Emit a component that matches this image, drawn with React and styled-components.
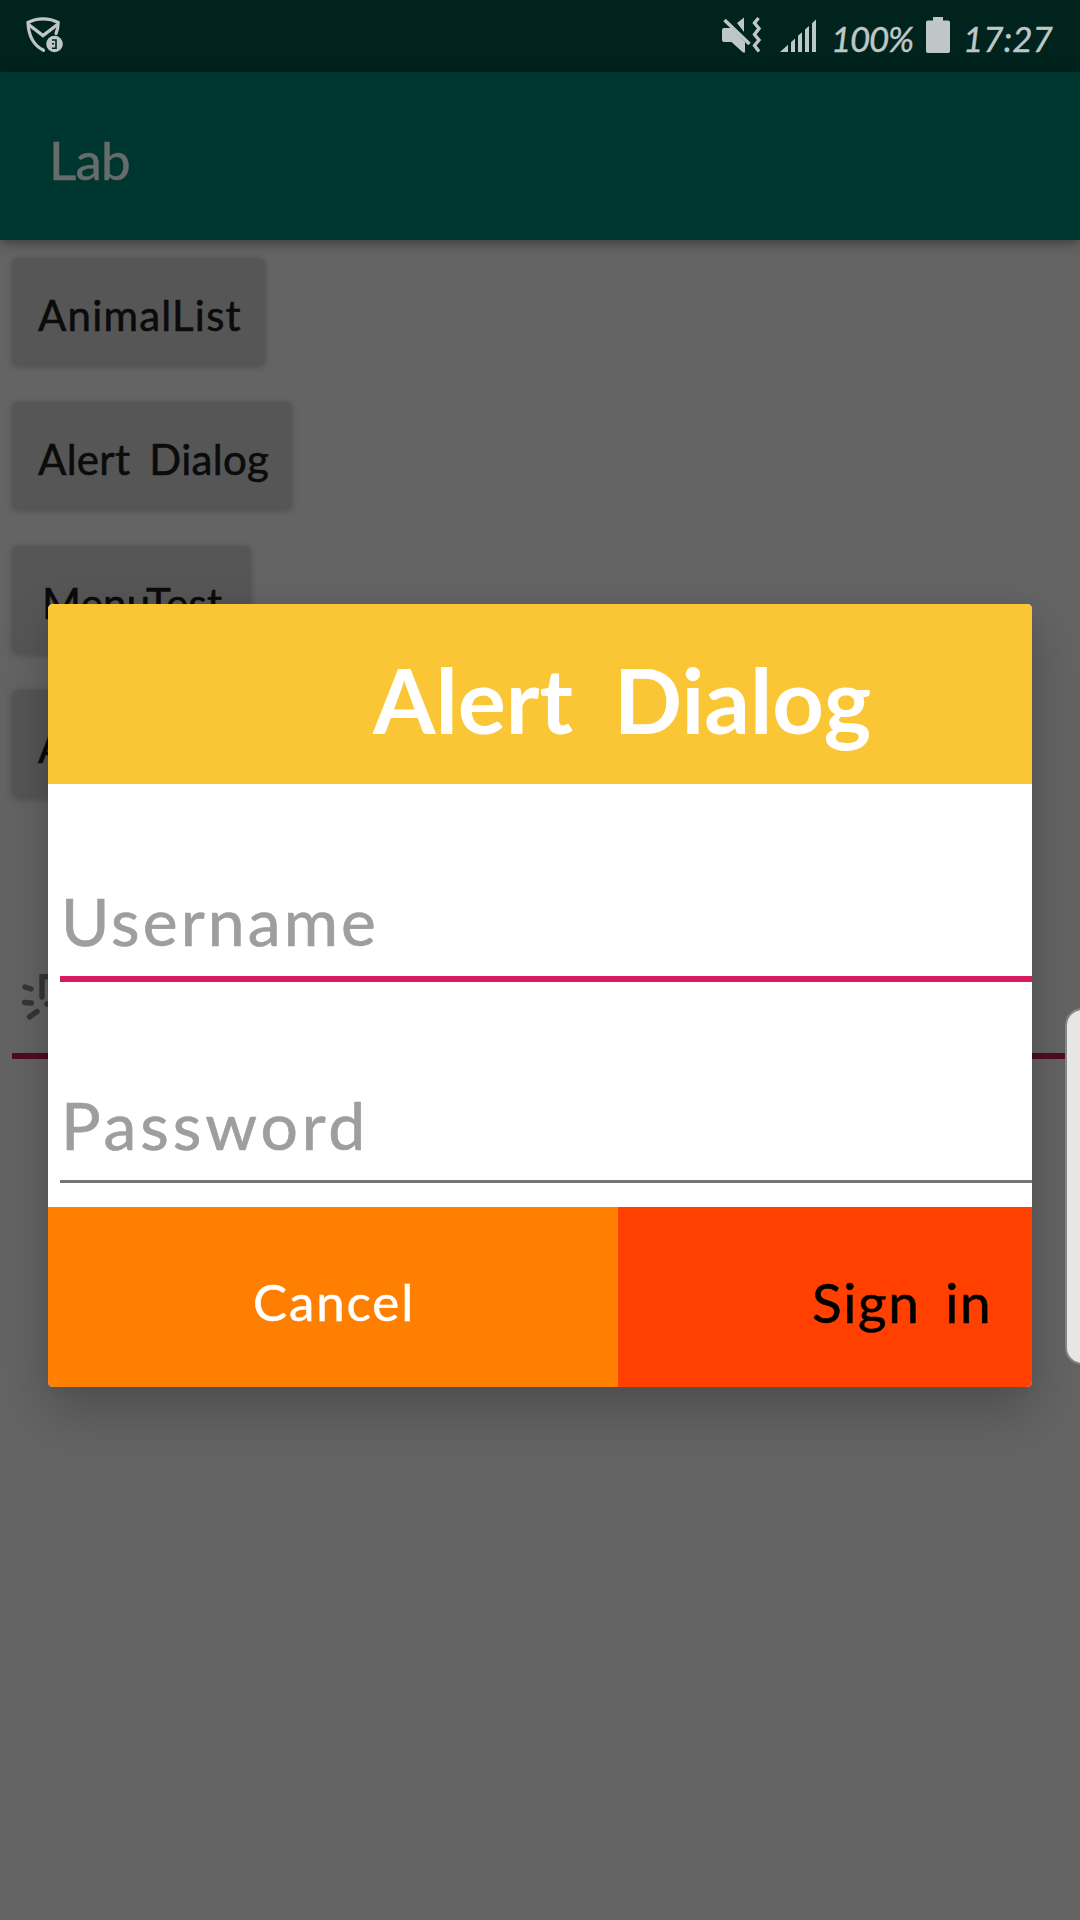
import React from "react";
import styled, { createGlobalStyle } from "styled-components";

const GlobalStyle = createGlobalStyle`
  * { box-sizing: border-box; }
  html, body { margin: 0; padding: 0; overflow: hidden; }
  body { font-family: Lato, "Open Sans", sans-serif; background: #646464; }
  button { font-family: inherit; border: 0; cursor: pointer; }
`;

const Screen = styled.div`
  position: relative;
  width: 1080px;
  height: 1920px;
  overflow: hidden;
  display: flex;
  flex-direction: column;
  background: #646464;
`;

const StatusBar = styled.header`
  display: flex;
  align-items: flex-start;
  justify-content: space-between;
  height: 72px;
  flex: none;
  padding: 14px 26px 0 24px;
  background: #00231d;
  color: #bfc7c6;
`;

const StatusGroup = styled.div`
  display: flex;
  align-items: flex-start;
`;

const StatusIcon = styled.svg`
  display: block;
  height: 42px;
  width: ${(p) => p.$w}px;
  margin-right: ${(p) => p.$gap || 0}px;
`;

const StatusText = styled.span`
  width: ${(p) => p.$w}px;
  margin-right: ${(p) => p.$gap || 0}px;
  font-size: 35px;
  line-height: 48px;
  font-style: italic;
  white-space: nowrap;
  letter-spacing: ${(p) => p.$ls}px;
  -webkit-text-stroke: 0.4px currentColor;
`;

const AppBar = styled.div`
  display: flex;
  align-items: center;
  height: 168px;
  flex: none;
  padding: 8px 48px 0 49px;
  background: #003630;
  box-shadow: 0 3px 12px rgba(0, 0, 0, 0.4);
  z-index: 1;
`;

const AppTitle = styled.h1`
  margin: 0;
  font-size: 53px;
  line-height: 68px;
  font-weight: 400;
  color: #676c6b;
  letter-spacing: -0.8px;
  -webkit-text-stroke: 0.5px currentColor;
`;

const Content = styled.main`
  display: flex;
  flex-direction: column;
  align-items: flex-start;
  gap: 36px;
  padding: 18px 12px 0;
`;

const ListButton = styled.button`
  width: ${(p) => p.$w}px;
  height: 108px;
  padding: 6px 0 0 ${(p) => p.$pad || 26}px;
  border-radius: 6px;
  background: #565656;
  color: #0b0b0b;
  box-shadow: 0 1px 6px rgba(0, 0, 0, 0.22);
  font-size: 42px;
  line-height: 52px;
  text-align: left;
  white-space: nowrap;
  letter-spacing: ${(p) => p.$ls}px;
  word-spacing: ${(p) => p.$ws || 0}px;
  -webkit-text-stroke: 0.6px currentColor;
`;

const BackField = styled.div`
  align-self: stretch;
  height: 225px;
  border-bottom: 6px solid #4f0b25;
  display: flex;
  align-items: flex-end;
  padding: 0 0 31px 8px;
`;

const Overlay = styled.div`
  position: absolute;
  inset: 72px 0 0 0;
  z-index: 2;
  display: flex;
  align-items: flex-start;
  justify-content: center;
  padding-top: 532px;
`;

const Dialog = styled.section`
  width: 984px;
  height: 783px;
  display: flex;
  flex-direction: column;
  overflow: hidden;
  border-radius: 5px;
  background: #fff;
  box-shadow: 0 24px 54px rgba(0, 0, 0, 0.23), 0 0 20px rgba(0, 0, 0, 0.03);
`;

const DialogTitle = styled.h2`
  margin: 0;
  height: 180px;
  flex: none;
  padding: 40px 0 0 325px;
  background: #fbc635;
  color: #fff;
  font-size: 90px;
  line-height: 110px;
  font-weight: 700;
  white-space: nowrap;
  letter-spacing: 0;
  word-spacing: 19px;
`;

const Fields = styled.div`
  flex: 1;
  padding-left: 12px;
`;

const Field = styled.div`
  height: ${(p) => p.$h}px;
  display: flex;
  align-items: flex-end;
  padding: 0 0 ${(p) => p.$pb}px 1px;
  border-bottom: ${(p) => p.$line};
`;

const Hint = styled.span`
  font-size: 66px;
  line-height: 80px;
  color: #9e9e9e;
  letter-spacing: ${(p) => p.$ls}px;
  -webkit-text-stroke: 0.7px currentColor;
`;

const Actions = styled.div`
  display: flex;
  height: 180px;
  flex: none;
`;

const Action = styled.button`
  width: ${(p) => p.$w}px;
  padding: 10px 0 0 ${(p) => p.$pad}px;
  background: ${(p) => p.$bg};
  color: ${(p) => p.$color};
  font-size: ${(p) => p.$size}px;
  line-height: 62px;
  text-align: left;
  white-space: nowrap;
  letter-spacing: ${(p) => p.$ls}px;
  word-spacing: ${(p) => p.$ws || 0}px;
  -webkit-text-stroke: 0.5px currentColor;
`;

const EdgeHandle = styled.aside`
  position: absolute;
  z-index: 3;
  top: 1008px;
  right: -20px;
  width: 35px;
  height: 357px;
  border: 2px solid #858585;
  border-radius: 18px;
  background: #e6e6e6;
`;

function MailShieldIcon() {
  return (
    <StatusIcon $w={42} viewBox="24 14 42 42" fill="none">
      <path d="M56 33.500c1.600-3.600 2.200-7 2.200-11C49 17.600 37 17.600 28 22.500 28.500 37 34 45.500 43.500 50.300" stroke="currentColor" strokeWidth="3.200" strokeLinecap="round" strokeLinejoin="round" />
      <path d="M28.500 24.500 43 35.500 57.500 24.500" stroke="currentColor" strokeWidth="3.400" />
      <circle cx="54.500" cy="44" r="8.300" fill="currentColor" />
      <path d="M52 40h4v8.200h-4M52 43.800h2" stroke="#00231d" strokeWidth="1.600" />
    </StatusIcon>
  );
}

function MuteVibrateIcon() {
  return (
    <StatusIcon $w={40} $gap={18} viewBox="722 14 40 42" fill="currentColor">
      <path d="M722 30q0-2 2-2h7l14 14v10.500h-2L731.500 42H724q-2 0-2-2zM737 23l7-5.500V32z" />
      <path d="m724.500 20 25 24" stroke="currentColor" strokeWidth="3.600" fill="none" />
      <path d="m758.500 18-4 5 4.500 5.500-4.500 6 4.500 5.500-4.500 5.500 4.500 6" stroke="currentColor" strokeWidth="3.400" fill="none" />
    </StatusIcon>
  );
}

function SignalIcon() {
  return (
    <StatusIcon $w={37} $gap={14} viewBox="780 14 37 42" fill="currentColor">
      <path d="M780 52l8-7.200V52zM791 42.200l4-3.600V52h-4zM798 35.800l4-3.600V52h-4zM805 29.500l4-3.600V52h-4zM812 23.200l4-3.600V52h-4z" />
    </StatusIcon>
  );
}

function BatteryIcon() {
  return (
    <StatusIcon $w={24} $gap={13} viewBox="926 14 24 42" fill="currentColor">
      <path d="M933 17h10v3.500h5q2 0 2 2V51q0 2-2 2h-20q-2 0-2-2V22.500q0-2 2-2h5z" />
    </StatusIcon>
  );
}

function SparkIcon() {
  return (
    <svg width="44" height="48" viewBox="20 974 44 48" fill="none" stroke="#363636" strokeWidth="5.400" strokeLinecap="round">
      <path d="m25 987 6 2M24.500 1002.500l7 .500M29.500 1017l7.500-5.500M42 997v-20.200h18M47 1004h8" />
    </svg>
  );
}

export default function App() {
  return (
    <Screen>
      <GlobalStyle />
      <StatusBar>
        <MailShieldIcon />
        <StatusGroup>
          <MuteVibrateIcon />
          <SignalIcon />
          <StatusText $w={81} $gap={14} $ls={-1.3}>100%</StatusText>
          <BatteryIcon />
          <StatusText $w={91} $ls={0}>17:27</StatusText>
        </StatusGroup>
      </StatusBar>
      <AppBar>
        <AppTitle>Lab</AppTitle>
      </AppBar>
      <Content>
        <ListButton $w={253} $ls={1.2}>AnimalList</ListButton>
        <ListButton $w={280} $ls={0.3} $ws={8}>Alert Dialog</ListButton>
        <ListButton $w={239} $pad={30} $ls={0.3}>MenuTest</ListButton>
        <ListButton $w={239} $ls={0}>A</ListButton>
        <BackField>
          <SparkIcon />
        </BackField>
      </Content>
      <Overlay>
        <Dialog>
          <DialogTitle>Alert Dialog</DialogTitle>
          <Fields>
            <Field $h={198} $pb={15} $line="6px solid #d81b60">
              <Hint $ls={3.1}>Username</Hint>
            </Field>
            <Field $h={201} $pb={15} $line="3px solid #757575">
              <Hint $ls={3.9}>Password</Hint>
            </Field>
          </Fields>
          <Actions>
            <Action $w={570} $pad={205} $bg="#ff8000" $color="#fff" $size={51} $ls={1.9}>Cancel</Action>
            <Action $w={414} $pad={194} $bg="#ff4000" $color="#000" $size={55} $ls={1.6} $ws={9}>Sign in</Action>
          </Actions>
        </Dialog>
      </Overlay>
      <EdgeHandle />
    </Screen>
  );
}
